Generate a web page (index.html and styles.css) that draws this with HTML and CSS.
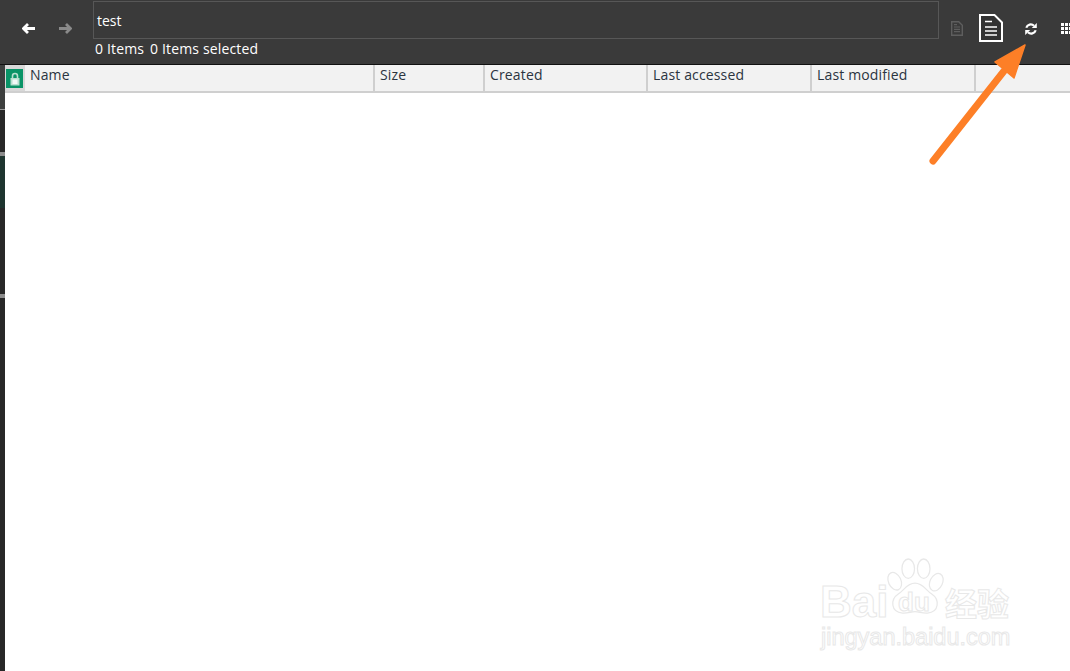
FILE: index.html
```html
<!DOCTYPE html>
<html lang="en">
<head>
<meta charset="utf-8">
<title>test</title>
<link rel="stylesheet" href="styles.css">
</head>
<body>
<div class="app">
  <header class="toolbar">
    <div class="nav">
      <svg class="nav-icon" viewBox="0 0 13 11"><path d="M6 1 1.500 5.500 6 10M2 5.500h11" fill="none" stroke="#fff" stroke-width="2.800"/></svg>
      <svg class="nav-icon" viewBox="0 0 13 11"><path d="M7 1l4.500 4.500L7 10M11 5.500H0" fill="none" stroke="#8a8a8a" stroke-width="2.800"/></svg>
    </div>
    <div class="path-block">
      <div class="path-input">test</div>
      <div class="status"><span>0 Items</span><span>0 Items selected</span></div>
    </div>
    <div class="tools">
      <svg class="doc-small" viewBox="0 0 12 15"><path d="M.7.7h7l3.600 3.600v10H.7z" fill="none" stroke="#5e5e5e" stroke-width="1.400"/><path d="M3 6h6M3 8.300h6M3 10.600h6M3 3.600h3" stroke="#5e5e5e" stroke-width="1.200"/></svg>
      <svg class="doc-large" viewBox="0 0 24 28"><path d="M1 1h14.500L23 8.500V27H1z" fill="#333" stroke="#fff" stroke-width="2"/><path d="M6 7.500h7M6 13h12M6 17h12M6 21h12" stroke="#fff" stroke-width="1.600"/></svg>
      <svg class="refresh" viewBox="0 0 12 14"><path d="M1.300 5.800A4.600 4.600 0 0 1 9 3.800M10.700 8.200A4.600 4.600 0 0 1 3 10.200" fill="none" stroke="#fff" stroke-width="2.200"/><path d="M11.800 1v5H6.800zM.2 13V8h5z" fill="#fff"/></svg>
      <div class="grid-icon"><i></i><i></i><i></i><i></i><i></i><i></i><i></i><i></i><i></i></div>
    </div>
  </header>
  <div class="body">
    <aside class="sidebar">
      <div class="side-a"></div>
      <div class="side-b"></div>
      <div class="side-sep"></div>
      <div class="side-c"></div>
      <div class="side-b side-d"></div>
      <div class="side-sep"></div>
      <div class="side-b side-e"></div>
    </aside>
    <main class="content">
      <div class="table-head">
        <div class="lock-cell">
          <div class="lock-badge">
            <svg viewBox="0 0 10 14"><path d="M2.500 6.500V4a2.500 2.500 0 0 1 5 0v2.500" fill="none" stroke="#b9e0d0" stroke-width="1.600"/><rect x=".5" y="6" width="9" height="7.500" fill="#b9e0d0"/><rect x="2.500" y="7.500" width="5" height="4.500" fill="#f2faf7"/></svg>
          </div>
        </div>
        <div class="col col-name">Name</div>
        <div class="col col-size">Size</div>
        <div class="col col-created">Created</div>
        <div class="col col-date">Last accessed</div>
        <div class="col col-date">Last modified</div>
        <div class="col col-rest"></div>
      </div>
    </main>
  </div>
</div>
<svg class="arrow" viewBox="0 0 100 125"><path d="M5 119 76 29" stroke="#fd7f27" stroke-width="7" stroke-linecap="round" fill="none"/><path d="M97 3 67 20 86 36z" fill="#fd7f27" stroke="#fd7f27" stroke-width="1.500" stroke-linejoin="round"/></svg>
<div class="watermark">
  <svg class="paw" viewBox="0 0 60 62">
    <g fill="#fff" stroke="#e8e8e8" stroke-width="1.300">
      <ellipse cx="9" cy="24" rx="6.500" ry="9.500" transform="rotate(-25 9 24)"/>
      <ellipse cx="23" cy="11" rx="6.500" ry="10"/>
      <ellipse cx="39" cy="11" rx="6.500" ry="10"/>
      <ellipse cx="52" cy="25" rx="6.500" ry="9.500" transform="rotate(25 52 25)"/>
      <path d="M30 26c8 0 11 7 17 11 9 6 8 19-4 20-5 .5-9-1.500-13-1.500s-8 2-13 1.500C5 56 4 43 13 37c6-4 9-11 17-11z"/>
    </g>
  </svg>
  <div class="wm-top"><span class="wm-bai">Bai</span><span class="wm-du">du</span><span class="wm-cn">经验</span></div>
  <div class="wm-url">jingyan.baidu.com</div>
</div>
</body>
</html>
```
FILE: styles.css
```css
html, body {
  margin: 0;
  height: 100%;
  overflow: hidden;
  background: #fff;
  font-family: "Open Sans", "Noto Sans", sans-serif;
}
.app {
  display: flex;
  flex-direction: column;
  height: 671px;
}
.toolbar {
  flex: none;
  height: 64px;
  background: #3a3a3a;
  border-bottom: 1px solid #111;
  display: flex;
  color: #fff;
}
.nav {
  width: 93px;
  display: flex;
  gap: 24px;
  padding: 23px 0 0 22px;
  box-sizing: border-box;
}
.nav-icon {
  width: 13px;
  height: 11px;
}
.path-block {
  width: 846px;
  padding-top: 1px;
}
.path-input {
  height: 36px;
  border: 1px solid #575757;
  padding-left: 3px;
  font-size: 14px;
  line-height: 37px;
}
.status {
  display: flex;
  gap: 6px;
  padding-left: 2px;
  font-size: 14px;
  line-height: 19px;
  letter-spacing: .15px;
}
.tools {
  flex: 1;
  display: flex;
  align-items: flex-start;
  overflow: hidden;
}
.doc-small {
  flex: none;
  width: 12px;
  height: 15px;
  margin: 21px 0 0 12px;
}
.doc-large {
  flex: none;
  width: 24px;
  height: 28px;
  margin: 14px 0 0 16px;
}
.refresh {
  flex: none;
  width: 12px;
  height: 14px;
  margin: 22px 0 0 22px;
}
.grid-icon {
  flex: none;
  display: grid;
  grid-template-columns: repeat(3, 3px);
  grid-auto-rows: 3px;
  gap: 1px;
  margin: 23px 0 0 24px;
}
.grid-icon i {
  background: #fff;
}
.body {
  flex: 1;
  display: flex;
  min-height: 0;
}
.sidebar {
  flex: none;
  width: 5px;
  display: flex;
  flex-direction: column;
}
.side-a {
  height: 44px;
  background: #3d3f3e;
  border-bottom: 1px solid #999;
}
.side-b {
  height: 42px;
  background: #282828;
}
.side-sep {
  height: 4px;
  background: #8c8c8c;
}
.side-c {
  height: 52px;
  background: #1e352f;
}
.side-d {
  height: 86px;
}
.side-e {
  flex: 1;
}
.content {
  flex: 1;
  min-width: 0;
  background: #fff;
}
.table-head {
  display: flex;
  height: 28px;
  box-sizing: border-box;
  background: #f2f2f2;
  border-bottom: 2px solid #cfcfcf;
  color: #2b3440;
  font-size: 14px;
  line-height: 20px;
  letter-spacing: .15px;
}
.lock-cell {
  flex: none;
  width: 20px;
  height: 26px;
  box-sizing: border-box;
  padding: 4px 2px 0 1px;
  background: #d8d8d8;
}
.lock-badge {
  height: 19px;
  background: #0a9467;
  display: flex;
  align-items: center;
  justify-content: center;
}
.lock-badge svg {
  width: 10px;
  height: 14px;
}
.col {
  flex: none;
  box-sizing: border-box;
  padding-left: 5px;
  border-right: 2px solid #cfcfcf;
}
.col-name {
  width: 350px;
}
.col-size {
  width: 110px;
}
.col-created {
  width: 163px;
}
.col-date {
  width: 164px;
}
.col-rest {
  flex: 1;
  border-right: 0;
}
.arrow {
  position: absolute;
  left: 928px;
  top: 42px;
  width: 100px;
  height: 125px;
}
.watermark {
  position: absolute;
  left: 820px;
  top: 556px;
  width: 200px;
  height: 92px;
}
.paw {
  position: absolute;
  left: 66px;
  top: 1px;
  width: 58px;
  height: 62px;
}
.wm-top {
  position: absolute;
  left: 0;
  top: 23px;
  display: flex;
  align-items: center;
  height: 46px;
  white-space: nowrap;
  font-family: "Liberation Sans", sans-serif;
  color: #fff;
  -webkit-text-stroke: 1px #e8e8e8;
}
.wm-bai {
  flex: none;
  width: 78px;
  font-size: 44px;
  font-weight: 700;
}
.wm-du {
  flex: none;
  width: 47px;
  font-size: 26px;
  font-weight: 700;
}
.wm-cn {
  flex: none;
  font-family: "Noto Sans CJK SC", sans-serif;
  font-size: 32px;
  font-weight: 700;
}
.wm-url {
  position: absolute;
  left: 1px;
  top: 68px;
  font-family: "Liberation Sans", sans-serif;
  font-size: 23.500px;
  line-height: 26px;
  white-space: nowrap;
  color: #fff;
  -webkit-text-stroke: 1px #e8e8e8;
}
```
